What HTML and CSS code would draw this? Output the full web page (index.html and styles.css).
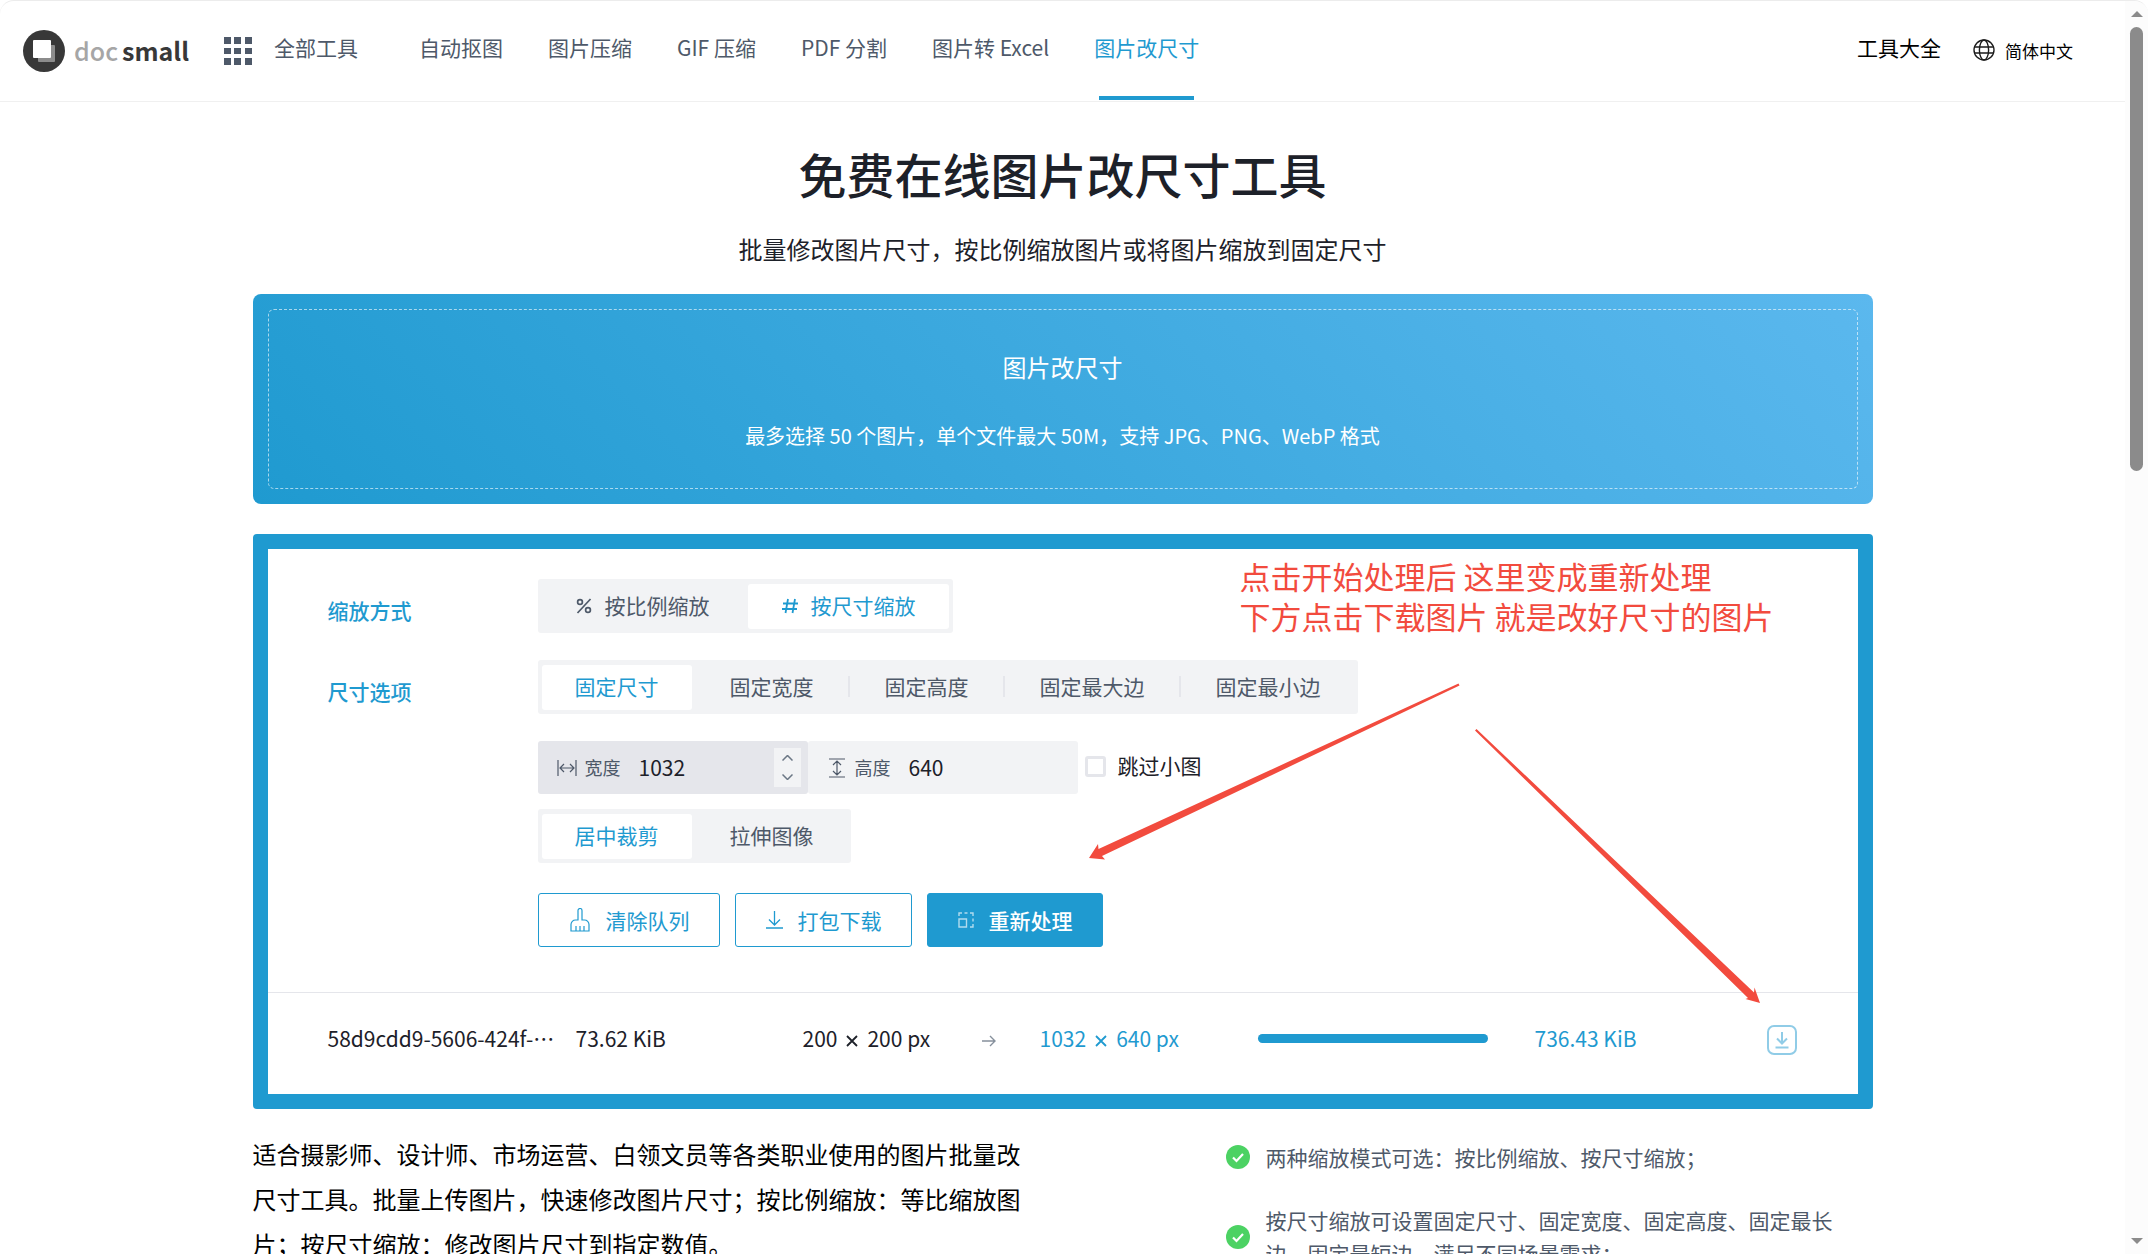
FILE: index.html
```html
<!DOCTYPE html>
<html lang="zh-CN">
  <head>
    <meta charset="UTF-8">
    <title>免费在线图片改尺寸工具 - docsmall</title>
    <link rel="stylesheet" href="styles.css">
  </head>
  <body>
    <div class="page">
      <header class="header">
        <a class="logo" href="#">
          <svg width="42" height="42" viewBox="0 0 42 42">
            <circle cx="21" cy="21" r="21" fill="#383838"/>
            <rect x="15" y="15" width="17" height="17" rx="1" fill="#8c8c8c"/>
            <rect x="10" y="10" width="18" height="18" rx="1" fill="#fff"/>
          </svg>
          <span class="logo-text">doc<b>small</b></span>
        </a>
        <nav class="nav">
          <a class="all-tools" href="#">
            <svg width="28" height="28" viewBox="0 0 28 28" fill="#4e5969">
              <path d="M0 0h7v7H0zM10 0h7v7h-7zM21 0h7v7h-7zM0 11h7v6H0zM10 11h7v6h-7zM21 11h7v6h-7zM0 21h7v7H0zM10 21h7v7h-7zM21 21h7v7h-7z"/>
            </svg>
            全部工具
          </a>
          <a href="#">自动抠图</a>
          <a href="#">图片压缩</a>
          <a href="#">GIF 压缩</a>
          <a href="#">PDF 分割</a>
          <a href="#">图片转 Excel</a>
          <a class="active" href="#">图片改尺寸</a>
        </nav>
        <div class="header-right">
          <a href="#">工具大全</a>
          <button class="lang">
            <svg width="22" height="22" viewBox="0 0 22 22" fill="none" stroke="#1d1d1d" stroke-width="1.4">
              <circle cx="11" cy="11" r="10"/>
              <ellipse cx="11" cy="11" rx="4.6" ry="10"/>
              <path d="M1.5 8h19M1.5 14h19"/>
            </svg>
            简体中文
          </button>
        </div>
      </header>

      <main class="container">
        <h1>免费在线图片改尺寸工具</h1>
        <p class="subtitle">批量修改图片尺寸，按比例缩放图片或将图片缩放到固定尺寸</p>

        <div class="upload">
          <button class="upload-inner">
            <span class="upload-title">图片改尺寸</span>
            <span class="upload-hint">最多选择 50 个图片，单个文件最大 50M，支持 JPG、PNG、WebP 格式</span>
          </button>
        </div>

        <section class="panel">
          <form class="options">
            <div class="form-row">
              <div class="row-label" id="mode-label">缩放方式</div>
              <div class="segment mode" role="radiogroup" aria-labelledby="mode-label">
                <label>
                  <input type="radio" name="mode">
                  <span>
                    <svg width="16" height="16" viewBox="0 0 16 16" fill="none" stroke="currentColor" stroke-width="1.7">
                      <circle cx="4" cy="4" r="2.4"/><circle cx="12" cy="12" r="2.4"/><path d="M14.5 1L1.5 15"/>
                    </svg>
                    按比例缩放
                  </span>
                </label>
                <label>
                  <input type="radio" name="mode" checked>
                  <span>
                    <svg width="16" height="16" viewBox="0 0 16 16" fill="none" stroke="currentColor" stroke-width="1.8">
                      <path d="M6 1L3.500 15M13 1l-2.500 14M1 5.500h15M0 11h15"/>
                    </svg>
                    按尺寸缩放
                  </span>
                </label>
              </div>
            </div>

            <div class="form-row">
              <div class="row-label" id="size-label">尺寸选项</div>
              <div class="segment divided" role="radiogroup" aria-labelledby="size-label">
                <label><input type="radio" name="size" checked><span>固定尺寸</span></label>
                <label><input type="radio" name="size"><span>固定宽度</span></label>
                <label><input type="radio" name="size"><span>固定高度</span></label>
                <label><input type="radio" name="size"><span>固定最大边</span></label>
                <label><input type="radio" name="size"><span>固定最小边</span></label>
              </div>
            </div>

            <div class="form-row">
              <div class="fields">
                <div class="size-inputs">
                  <div class="number-box hover">
                    <label for="width">
                      <svg width="20" height="18" viewBox="0 0 20 18" fill="none" stroke="currentColor" stroke-width="1.2">
                        <path d="M1 1v16M19 1v16M3 9h14M7 5L3 9l4 4M13 5l4 4-4 4"/>
                      </svg>
                      宽度
                    </label>
                    <input type="text" id="width" value="1032">
                    <div class="stepper">
                      <button type="button" aria-label="增加">
                        <svg width="11" height="6" viewBox="0 0 11 6" fill="none" stroke="currentColor" stroke-width="1.5"><path d="M.5 5.500l5-5 5 5"/></svg>
                      </button>
                      <button type="button" aria-label="减少">
                        <svg width="11" height="6" viewBox="0 0 11 6" fill="none" stroke="currentColor" stroke-width="1.5"><path d="M.5.5l5 5 5-5"/></svg>
                      </button>
                    </div>
                  </div>
                  <div class="number-box">
                    <label for="height">
                      <svg width="20" height="20" viewBox="0 0 20 20" fill="none" stroke="currentColor" stroke-width="1.2">
                        <path d="M2 1h16M2 19h16M10 3v14M6 7l4-4 4 4M6 13l4 4 4-4"/>
                      </svg>
                      高度
                    </label>
                    <input type="text" id="height" value="640">
                  </div>
                  <label class="check"><input type="checkbox">跳过小图</label>
                </div>
                <div class="segment" role="radiogroup" aria-label="裁剪方式">
                  <label><input type="radio" name="fit" checked><span>居中裁剪</span></label>
                  <label><input type="radio" name="fit"><span>拉伸图像</span></label>
                </div>
              </div>
            </div>

            <div class="form-row actions">
              <button type="button" class="btn">
                <svg width="22" height="24" viewBox="0 0 22 24" fill="none" stroke="currentColor" stroke-width="1.2">
                  <path d="M9 12V2.500a1.500 1.500 0 0 1 4 0V12h2.500a4.500 4.500 0 0 1 4.500 4.500V23H2v-6.500A4.500 4.500 0 0 1 6.500 12zM7 18v5M11 18v5M15 18v5"/>
                </svg>
                清除队列
              </button>
              <button type="button" class="btn">
                <svg width="17" height="18" viewBox="0 0 17 18" fill="none" stroke="currentColor" stroke-width="1.3">
                  <path d="M8.500 0v14M3 8.500l5.500 5.500L14 8.500M0 17h17"/>
                </svg>
                打包下载
              </button>
              <button type="button" class="btn primary">
                <svg width="16" height="16" viewBox="0 0 16 16" fill="none" stroke="currentColor" stroke-width="1.4" opacity=".65">
                  <path d="M1 7h7.500v8H1zM1 4V1h3M6.500 1h3M12 1h3v3M15 6.500v3M15 12v3h-3"/>
                </svg>
                重新处理
              </button>
            </div>
          </form>

          <table class="queue">
            <colgroup>
              <col class="c-name"><col class="c-size"><col class="c-dim"><col class="c-arrow">
              <col class="c-out"><col class="c-bar"><col class="c-result"><col>
            </colgroup>
            <tr>
              <td>58d9cdd9-5606-424f-…</td>
              <td>73.62 KiB</td>
              <td>200<svg class="times" width="12" height="12" viewBox="0 0 12 12" stroke="currentColor" stroke-width="1.8"><path d="M1 1l10 10M11 1L1 11"/></svg>200 px</td>
              <td class="arrow">
                <svg width="14" height="12" viewBox="0 0 14 12" fill="none" stroke="currentColor" stroke-width="1.4"><path d="M0 6h13M8 1l5 5-5 5"/></svg>
              </td>
              <td class="blue">1032<svg class="times" width="12" height="12" viewBox="0 0 12 12" stroke="currentColor" stroke-width="1.8"><path d="M1 1l10 10M11 1L1 11"/></svg>640 px</td>
              <td><progress value="100" max="100"></progress></td>
              <td class="blue">736.43 KiB</td>
              <td>
                <button class="save" aria-label="下载">
                  <svg width="30" height="30" viewBox="0 0 30 30" fill="none" stroke="#90cce7" stroke-width="2">
                    <rect x="1" y="1" width="28" height="28" rx="6"/>
                    <path d="M15 7v11M10 13.500l5 5 5-5M8.500 22.500h13"/>
                  </svg>
                </button>
              </td>
            </tr>
          </table>

          <!-- 标注 -->
          <p class="note">点击开始处理后 这里变成重新处理<br>下方点击下载图片 就是改好尺寸的图片</p>
          <svg class="note-arrows" width="1620" height="575" viewBox="0 0 1620 575" fill="#f24b3e">
            <path d="M1206.500 151.500L849 322l3 3.500-16-1.500 9-14 .5 5L1205.500 149.500z"/>
            <path d="M1222 196.500L1495 464l-2.500 1L1507 469l-5.500-15.500-.5 5L1223.500 195z"/>
          </svg>
        </section>

        <div class="intro">
          <p>适合摄影师、设计师、市场运营、白领文员等各类职业使用的图片批量改尺寸工具。批量上传图片，快速修改图片尺寸；按比例缩放：等比缩放图片；按尺寸缩放：修改图片尺寸到指定数值。</p>
          <ul>
            <li>
              <svg width="24" height="24" viewBox="0 0 24 24"><circle cx="12" cy="12" r="12" fill="#4cd263"/><path d="M7 12.500l3.500 3.500L17 9" fill="none" stroke="#fff" stroke-width="2.200"/></svg>
              <span>两种缩放模式可选：按比例缩放、按尺寸缩放；</span>
            </li>
            <li>
              <svg width="24" height="24" viewBox="0 0 24 24"><circle cx="12" cy="12" r="12" fill="#4cd263"/><path d="M7 12.500l3.500 3.500L17 9" fill="none" stroke="#fff" stroke-width="2.200"/></svg>
              <span>按尺寸缩放可设置固定尺寸、固定宽度、固定高度、固定最长边、固定最短边，满足不同场景需求；</span>
            </li>
          </ul>
        </div>
      </main>
    </div>

    <div class="scrollbar">
      <svg width="12" height="6" viewBox="0 0 12 6" fill="#8b8b8b"><path d="M6 0l6 6H0z"/></svg>
      <div class="track"><div class="thumb"></div></div>
      <svg width="12" height="6" viewBox="0 0 12 6" fill="#8b8b8b"><path d="M0 0h12L6 6z"/></svg>
    </div>
  </body>
</html>
```
FILE: styles.css
```css
* {
  box-sizing: border-box;
}
body {
  margin: 0;
  display: flex;
  height: 100vh;
  overflow: hidden;
  border-top: 1px solid #ececec;
  border-radius: 14px 14px 0 0;
  background: #fff;
  color: #1d2129;
  font-family: "Noto Sans CJK SC", sans-serif;
  font-size: 21px;
  line-height: 33px;
}
a {
  color: inherit;
  text-decoration: none;
}
button, input {
  font: inherit;
  color: inherit;
  border: 0;
  padding: 0;
  background: none;
}
button {
  cursor: pointer;
}
h1, p, ul {
  margin: 0;
  padding: 0;
}
svg {
  flex: none;
}
.page {
  flex: 1;
  min-width: 0;
}

/* header */
.header {
  display: flex;
  align-items: center;
  height: 101px;
  padding: 0 52px 0 23px;
  border-bottom: 1px solid #f0f0f0;
}
.logo {
  display: flex;
  align-items: center;
  gap: 9px;
  width: 201px;
}
.logo-text {
  padding-bottom: 2px;
  color: #a6a6a6;
  font-size: 25px;
  font-weight: 500;
}
.logo-text b {
  margin-left: 4px;
  color: #383838;
}
.nav {
  display: flex;
  gap: 45px;
  height: 100px;
  color: #4e5969;
}
.nav a {
  display: flex;
  align-items: center;
  padding-bottom: 7px;
}
.nav .all-tools {
  gap: 22px;
  margin-right: 16px;
}
.all-tools svg {
  margin-top: 7px;
}
.nav .active {
  position: relative;
  color: #1f9ad0;
}
.nav .active::after {
  content: "";
  position: absolute;
  left: 5px;
  right: 5px;
  bottom: 1px;
  height: 4px;
  background: #1f9ad0;
}
.header-right {
  display: flex;
  align-items: center;
  gap: 32px;
  margin-left: auto;
  color: #000;
}
.header-right a {
  padding-bottom: 7px;
}
.lang {
  display: flex;
  align-items: center;
  gap: 10px;
  padding-bottom: 2px;
  font-size: 17px;
}

/* title */
.container {
  width: 1620px;
  max-width: 100%;
  margin: 0 auto;
}
h1 {
  padding-top: 35px;
  text-align: center;
  font-size: 48px;
  font-weight: 500;
  line-height: 72px;
}
.subtitle {
  margin-top: 22px;
  text-align: center;
  font-size: 24px;
  line-height: 36px;
}

/* upload */
.upload {
  margin-top: 27px;
  padding: 15px;
  border-radius: 8px;
  background: linear-gradient(45deg, #1f9ad0, #5bb8ee);
}
.upload-inner {
  display: flex;
  flex-direction: column;
  align-items: center;
  justify-content: center;
  gap: 36px;
  width: 100%;
  height: 180px;
  padding-top: 4px;
  border: 1px dashed rgba(255, 255, 255, .6);
  border-radius: 6px;
  color: #fff;
}
.upload-title {
  font-size: 24px;
}
.upload-hint {
  font-size: 20px;
}

/* panel */
.panel {
  position: relative;
  margin-top: 30px;
  border: 15px solid #1f9ad0;
  border-radius: 4px;
  background: #fff;
}
.options {
  padding: 30px 60px 45px;
}
.form-row {
  display: flex;
  margin-bottom: 27px;
}
.row-label {
  width: 210px;
  padding-top: 15px;
  color: #1f9ad0;
  font-weight: 500;
}
.segment {
  display: flex;
  gap: 5px;
  padding: 5px 4px 4px;
  border-radius: 3px;
  background: #f2f3f5;
  color: #4e5969;
}
.segment label {
  position: relative;
  cursor: pointer;
}
.segment input {
  position: absolute;
  opacity: 0;
}
.segment span {
  display: flex;
  align-items: center;
  gap: 13px;
  height: 45px;
  padding: 0 33px;
  padding-bottom: 2px;
  border-radius: 3px;
}
.segment.mode span {
  padding-left: 34px;
}
.segment input:checked + span {
  background: #fff;
  color: #1f9ad0;
}
.divided label:nth-child(n+3)::before {
  content: "";
  position: absolute;
  left: -4px;
  top: 11px;
  width: 2px;
  height: 21px;
  background: #e5e6eb;
}
.fields {
  display: flex;
  flex-direction: column;
  align-items: flex-start;
  gap: 15px;
  margin-left: 210px;
}
.size-inputs {
  display: flex;
}
.number-box {
  display: flex;
  align-items: center;
  width: 270px;
  height: 53px;
  padding: 0 7px 0 19px;
  border-radius: 3px;
  background: #f2f3f5;
}
.number-box.hover {
  background: #e5e6eb;
}
.number-box label {
  display: flex;
  align-items: center;
  gap: 8px;
  color: #4e5969;
  font-size: 18px;
}
.number-box input {
  flex: 1;
  min-width: 0;
  height: 33px;
  margin-left: 18px;
  outline: 0;
}
.stepper {
  display: flex;
  flex-direction: column;
  width: 27px;
  height: 39px;
  background: #f2f3f5;
  color: #6b7785;
}
.stepper button {
  display: flex;
  flex: 1;
  align-items: center;
  justify-content: center;
}
.check {
  display: flex;
  align-items: center;
  gap: 12px;
  height: 48px;
  margin-left: 7px;
}
.check input {
  appearance: none;
  width: 21px;
  height: 21px;
  margin: 2px 0 0;
  border: 3px solid #e5e6eb;
  border-radius: 3px;
  background: #fff;
}
.actions {
  gap: 15px;
  margin: 30px 0 0 210px;
}
.btn {
  display: flex;
  align-items: center;
  gap: 15px;
  height: 54px;
  padding: 0 29px 0 30px;
  border: 1px solid #1f9ad0;
  border-radius: 3px;
  color: #1f9ad0;
}
.btn.primary {
  background: #1f9ad0;
  color: #fff;
  font-weight: 500;
}

/* queue */
.queue {
  width: 100%;
  table-layout: fixed;
  border-collapse: collapse;
  border-top: 1px solid #e5e6eb;
}
.queue td {
  height: 101px;
  padding: 0 0 10px;
  white-space: nowrap;
}
.queue td:first-child {
  padding-left: 60px;
}
.queue svg {
  vertical-align: middle;
}
.c-name { width: 308px; }
.c-size { width: 227px; }
.c-dim { width: 179px; }
.c-arrow { width: 58px; }
.c-out { width: 218px; }
.c-bar { width: 277px; }
.c-result { width: 232px; }
.times {
  margin: 0 9px;
}
.arrow {
  color: #86909c;
}
.blue {
  color: #1f9ad0;
}
progress {
  appearance: none;
  display: block;
  width: 230px;
  height: 9px;
  border: 0;
}
progress::-webkit-progress-bar {
  border-radius: 5px;
  background: #e5e6eb;
}
progress::-webkit-progress-value {
  border-radius: 5px;
  background: #1f9ad0;
}
.save {
  display: block;
}

/* annotation lies over the panel */
.note {
  position: absolute;
  top: 7px;
  right: 80px;
  width: 538px;
  color: #f24b3e;
  font-size: 31px;
  line-height: 40px;
  white-space: nowrap;
}
.note-arrows {
  position: absolute;
  top: -15px;
  left: -15px;
  pointer-events: none;
}

/* intro */
.intro {
  display: flex;
  justify-content: space-between;
  margin-top: 22px;
}
.intro p {
  width: 770px;
  color: #000;
  font-size: 24px;
  line-height: 45px;
}
.intro ul {
  display: flex;
  flex-direction: column;
  gap: 30px;
  width: 647px;
  padding: 10px 30px 0 0;
  list-style: none;
  color: #4e5969;
}
.intro li {
  display: flex;
  align-items: center;
  gap: 16px;
}

/* scrollbar */
.scrollbar {
  display: flex;
  flex-direction: column;
  align-items: center;
  gap: 10px;
  width: 23px;
  padding: 10px 0;
  background: #fcfcfc;
}
.track {
  flex: 1;
  width: 13px;
}
.thumb {
  height: 37%;
  border-radius: 7px;
  background: #8b8b8b;
}
```
